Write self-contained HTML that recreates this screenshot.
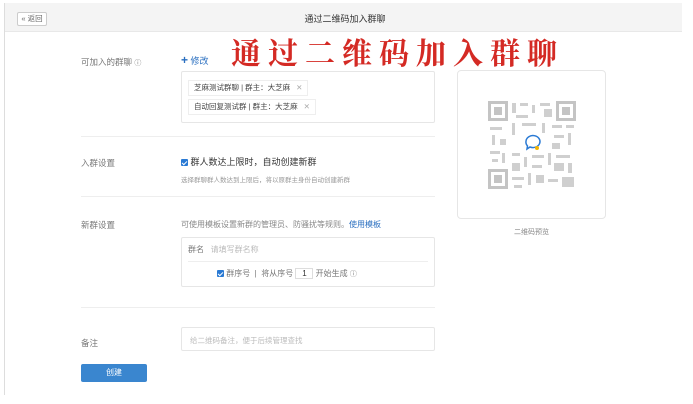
<!DOCTYPE html><html><head><meta charset="utf-8"><style>
*{margin:0;padding:0;box-sizing:border-box}
body{width:693px;height:404px;background:#fff;position:relative;overflow:hidden;font-family:"Liberation Sans","Noto Sans CJK SC",sans-serif;font-size:8px;color:#555}
.a{position:absolute}
.lbl{color:#777;font-size:8.5px}
.box{border:1px solid #e6e6e6;border-radius:2px;background:#fff}
.hr{height:1px;background:#eee}
.cb{display:inline-block;width:7px;height:7px;background:#2a7ad4;border-radius:1px;vertical-align:-1px;position:relative}
.cb:after{content:"";position:absolute;left:2px;top:0.5px;width:2px;height:4px;border:solid #fff;border-width:0 1px 1px 0;transform:rotate(45deg)}
.tag{position:absolute;border:1px solid #eee;background:#fff;height:16px;line-height:14px;padding:0 5px;font-size:7.5px;color:#444}
.tag i{font-style:normal;color:#aaa;margin-left:6px}
</style></head><body>
<div class="a" style="left:4px;top:3px;width:1px;height:392px;background:#ddd"></div>
<div class="a" style="left:5px;top:3px;width:677px;height:29px;background:#f4f4f4;border-bottom:1px solid #e8e8e8"></div>
<div class="a box" style="left:17px;top:12px;width:30px;height:14px;font-size:7.5px;line-height:12px;text-align:center;color:#666;border-color:#ccc">« 返回</div>
<div class="a" style="left:260px;top:12px;width:170px;text-align:center;font-size:9px;color:#333">通过二维码加入群聊</div>
<div class="a" style="left:231px;top:33px;font-family:'Noto Serif CJK SC',serif;font-weight:700;font-size:30px;color:#d42a24;letter-spacing:7px;line-height:36px">通过二维码加入群聊</div>
<div class="a lbl" style="left:81px;top:56px">可加入的群聊 <span style="font-size:7px">ⓘ</span></div>
<div class="a" style="left:181px;top:54px;color:#2a6fc0;font-size:9px"><b style="font-size:12px;line-height:10px">+</b> 修改</div>
<div class="a box" style="left:181px;top:71px;width:254px;height:52px"></div>
<div class="tag" style="left:188px;top:80px">芝麻测试群聊 | 群主：大芝麻<i>✕</i></div>
<div class="tag" style="left:188px;top:99px">自动回复测试群 | 群主：大芝麻<i>✕</i></div>
<div class="a hr" style="left:81px;top:136px;width:354px"></div>
<div class="a lbl" style="left:81px;top:157px">入群设置</div>
<div class="a" style="left:181px;top:155px;font-size:9px;color:#333"><span class="cb"></span> 群人数达上限时，自动创建新群</div>
<div class="a" style="left:181px;top:174px;font-size:6.5px;color:#999">选择群聊群人数达到上限后，将以原群主身份自动创建新群</div>
<div class="a hr" style="left:81px;top:196px;width:354px"></div>
<div class="a lbl" style="left:81px;top:219px">新群设置</div>
<div class="a" style="left:181px;top:219px;font-size:8px;color:#888">可使用模板设置新群的管理员、防骚扰等规则。<span style="color:#2a6fc0">使用模板</span></div>
<div class="a box" style="left:181px;top:237px;width:254px;height:50px"></div>
<div class="a" style="left:188px;top:244px;font-size:8px;color:#777">群名 &nbsp; <span style="color:#bbb">请填写群名称</span></div>
<div class="a hr" style="left:188px;top:261px;width:240px"></div>
<div class="a" style="left:217px;top:268px;font-size:8px;color:#777"><span class="cb"></span> 群序号 &nbsp;|&nbsp; 将从序号 <span style="display:inline-block;border:1px solid #ddd;width:18px;text-align:center;color:#333">1</span> 开始生成 <span style="font-size:7px">ⓘ</span></div>
<div class="a hr" style="left:81px;top:307px;width:354px"></div>
<div class="a lbl" style="left:81px;top:337px">备注</div>
<div class="a box" style="left:181px;top:327px;width:254px;height:24px;padding:7px 0 0 8px;font-size:7.5px;color:#bbb">给二维码备注，便于后续管理查找</div>
<div class="a" style="left:81px;top:364px;width:66px;height:18px;background:#3a86cf;border-radius:2px;color:#fff;font-size:8px;text-align:center;line-height:18px">创建</div>
<div class="a box" style="left:457px;top:70px;width:149px;height:149px;border-radius:4px"></div>
<svg class="a" style="left:488px;top:101px" width="88" height="88" viewBox="0 0 88 88" fill="#c4c4c4">
<rect x="0" y="0" width="20" height="20"/><rect x="3" y="3" width="14" height="14" fill="#fff"/><rect x="6" y="6" width="8" height="8"/>
<rect x="68" y="0" width="20" height="20"/><rect x="71" y="3" width="14" height="14" fill="#fff"/><rect x="74" y="6" width="8" height="8"/>
<rect x="0" y="68" width="20" height="20"/><rect x="3" y="71" width="14" height="14" fill="#fff"/><rect x="6" y="74" width="8" height="8"/>
<g opacity=".8"><rect x="24" y="2" width="4" height="10"/><rect x="32" y="2" width="8" height="3"/><rect x="44" y="4" width="3" height="8"/><rect x="52" y="2" width="10" height="3"/><rect x="56" y="8" width="8" height="8"/><rect x="28" y="14" width="12" height="3"/><rect x="24" y="22" width="3" height="12"/><rect x="34" y="22" width="14" height="3"/><rect x="54" y="22" width="3" height="10"/><rect x="64" y="24" width="10" height="3"/><rect x="78" y="24" width="8" height="3"/><rect x="2" y="26" width="12" height="3"/><rect x="4" y="34" width="3" height="10"/><rect x="12" y="38" width="6" height="6"/><rect x="66" y="34" width="10" height="3"/><rect x="80" y="32" width="3" height="12"/><rect x="64" y="42" width="8" height="6"/><rect x="2" y="50" width="10" height="3"/><rect x="14" y="52" width="3" height="10"/><rect x="24" y="52" width="8" height="3"/><rect x="36" y="56" width="3" height="10"/><rect x="44" y="54" width="12" height="3"/><rect x="60" y="52" width="3" height="12"/><rect x="68" y="54" width="14" height="3"/><rect x="4" y="58" width="6" height="3"/><rect x="24" y="62" width="8" height="8"/><rect x="44" y="64" width="10" height="3"/><rect x="66" y="62" width="10" height="8"/><rect x="80" y="62" width="4" height="10"/><rect x="24" y="76" width="12" height="3"/><rect x="40" y="72" width="3" height="12"/><rect x="48" y="74" width="8" height="8"/><rect x="60" y="78" width="10" height="3"/><rect x="74" y="76" width="12" height="10"/><rect x="26" y="84" width="8" height="3"/></g>
<path d="M38 40a7 6 0 1 1 4 6l-3 2 .5-3A6 6 0 0 1 38 40z" fill="none" stroke="#2a7ad4" stroke-width="1.5"/><circle cx="49" cy="47" r="2" fill="#f2b400"/>
</svg>
<div class="a" style="left:457px;top:227px;width:149px;text-align:center;font-size:7px;color:#888">二维码预览</div>
</body></html>
